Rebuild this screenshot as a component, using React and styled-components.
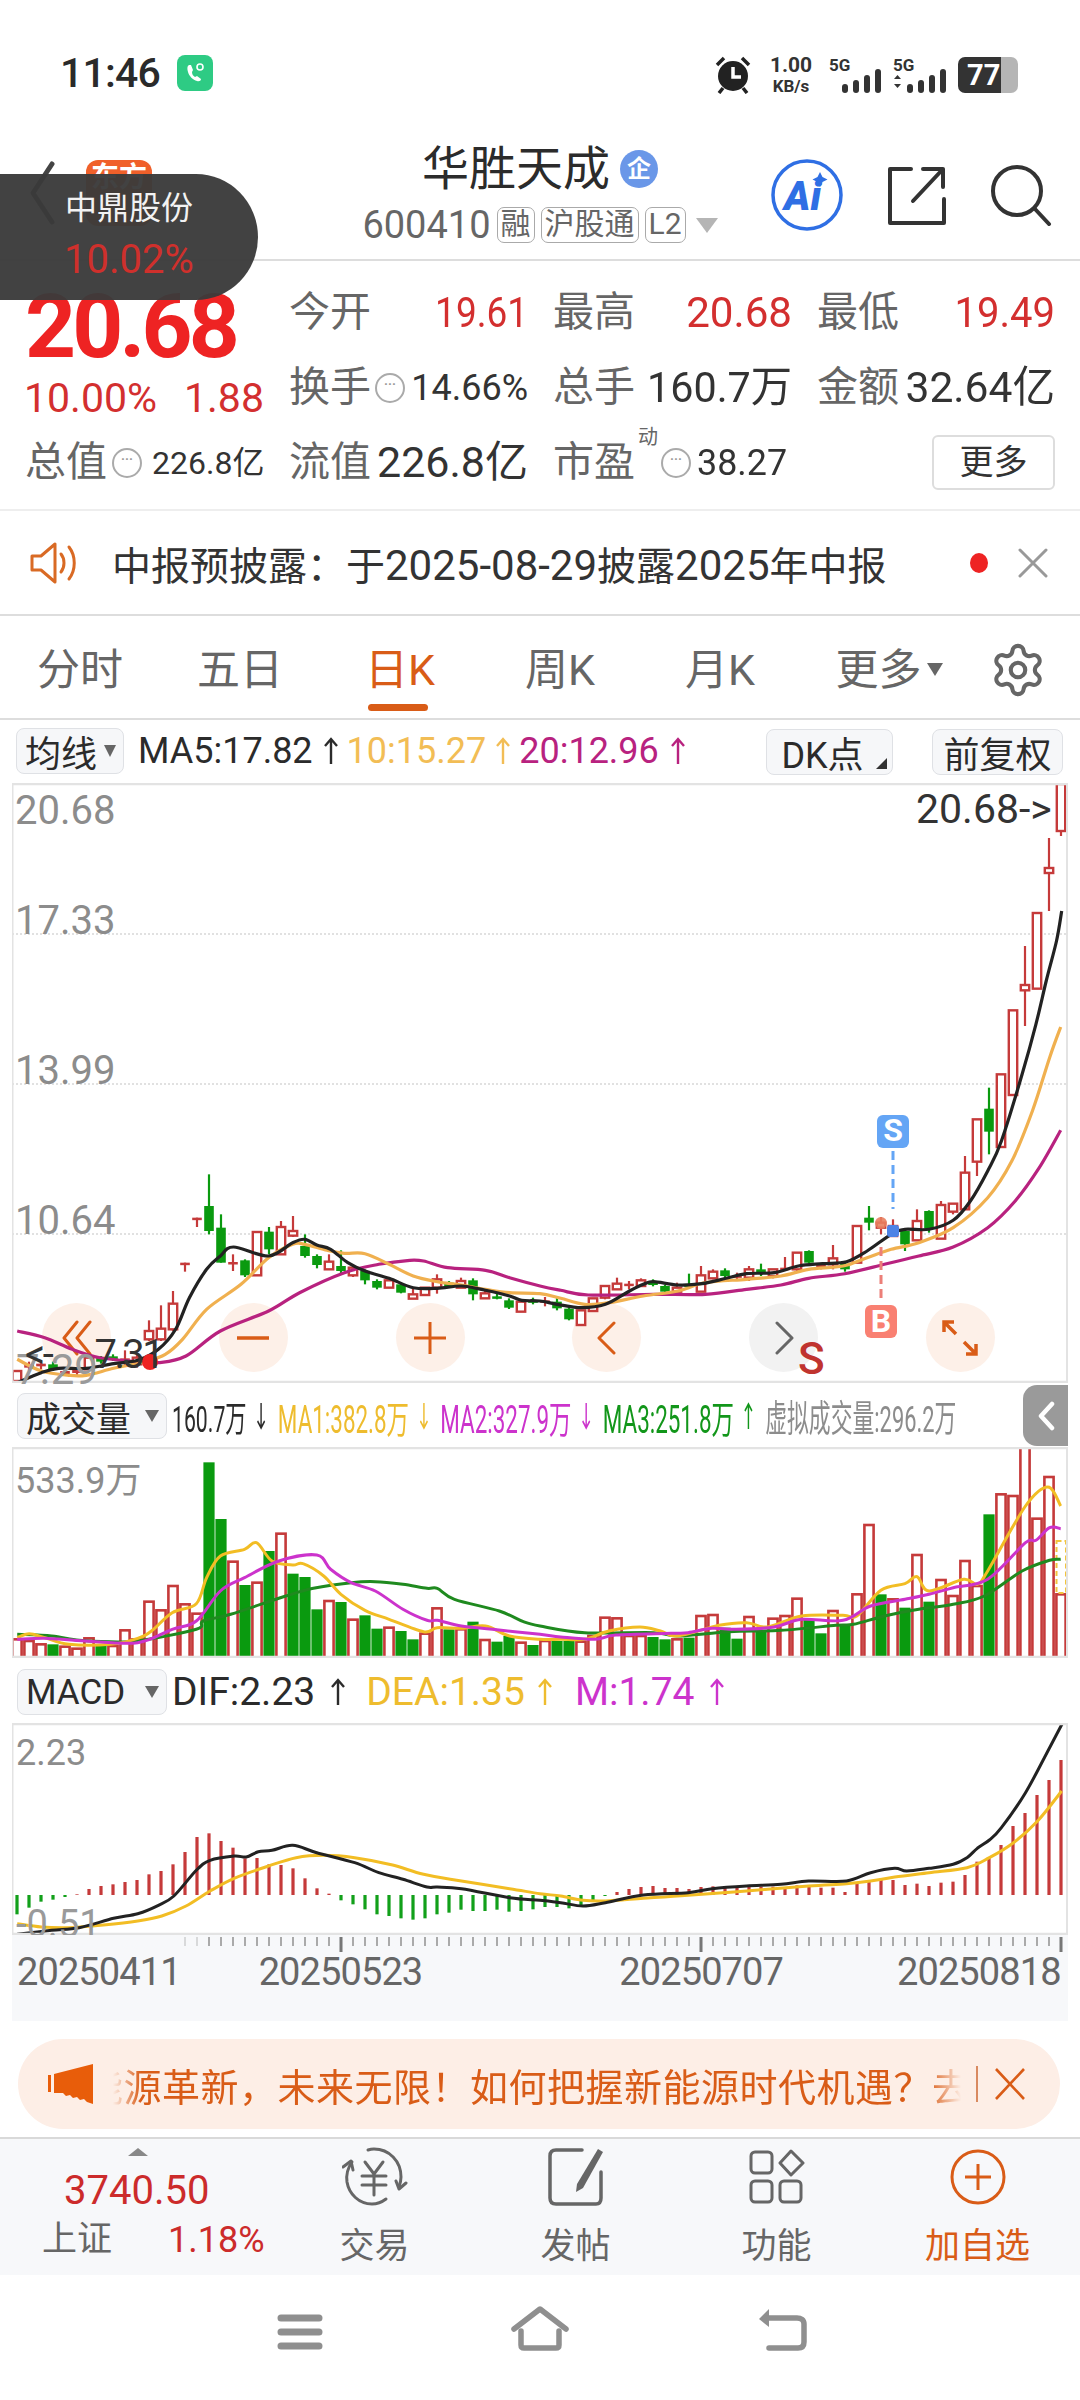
import React from 'react';
import styled, { createGlobalStyle } from 'styled-components';
import { Settings } from 'lucide-react';

const FONT = 'Roboto, "Noto Sans CJK SC", sans-serif';
const RED = '#d32f2f';

const Global = createGlobalStyle`
  html, body { margin: 0; padding: 0; background: #fff; }
  body { font-family: ${FONT}; color: #333; }
`;

const Page = styled.div`
  position: relative;
  width: 1080px;
  height: 2400px;
  overflow: hidden;
  background: #fff;
`;

/* ---------- status bar ---------- */
const StatusBar = styled.div`
  height: 130px;
  box-sizing: border-box;
  padding: 55px 62px 0 60px;
  display: flex;
  align-items: flex-start;
  justify-content: space-between;
`;
const StatusGroup = styled.div`
  display: flex;
  align-items: center;
  gap: ${p => p.$gap || 0}px;
  margin-left: ${p => p.$ml || 0}px;
`;
const Clock = styled.div`
  font-size: 41px;
  line-height: 35px;
  font-weight: 500;
  color: #2a2a2a;
  letter-spacing: -0.8px;
`;
const Speed = styled.div`
  display: flex;
  flex-direction: column;
  align-items: center;
  margin-left: 18px;
  width: 44px;
  color: #333;
  font-weight: 700;
`;
const SpeedValue = styled.span`
  font-size: 21px;
  line-height: 21px;
`;
const SpeedUnit = styled.span`
  font-size: 17px;
  line-height: 17px;
  margin-top: 2px;
`;
const Battery = styled.div`
  width: 60px;
  height: 36px;
  margin-left: 10px;
  border-radius: 7px;
  background: linear-gradient(90deg, #333 0 72%, #b5b5b5 72% 100%);
  color: #fff;
  font-size: 29px;
  font-weight: 700;
  line-height: 36px;
  padding-left: 9px;
  box-sizing: border-box;
`;

const ChatIcon = () => (
  <svg width="36" height="36" viewBox="0 0 36 36">
    <rect width="36" height="36" rx="8" fill="#2ecb84" />
    <path d="M12 10c-2 1-2 4-1 7 1 4 5 8 9 9 2 .5 4 0 4-2l-4-3-2 1c-2-1-3-3-3-5l1-2-2-5z" fill="#fff" />
    <circle cx="23" cy="12" r="3" fill="none" stroke="#fff" strokeWidth="1.6" />
  </svg>
);
const AlarmIcon = () => (
  <svg width="36" height="38" viewBox="0 0 36 38">
    <path d="M2 9 9 2M34 9l-7-7M8 32l-4 5M28 32l4 5" stroke="#222" strokeWidth="3.5" />
    <circle cx="18" cy="20" r="15" fill="#222" />
    <path d="M18 11v10h8" fill="none" stroke="#fff" strokeWidth="3.5" />
  </svg>
);
const SignalIcon = ({ arrows }) => {
  const w = arrows ? 55 : 53;
  return (
    <svg width={w} height="36" viewBox={`0 0 ${w} 36`}>
      <text x="0" y="14" fontFamily="Roboto" fontWeight="700" fontSize="17" fill="#333">5G</text>
      {arrows && <path d="M1 22l3.5-4 3.5 4zM1 27l3.5 4 3.5-4z" fill="#333" />}
      {[0, 1, 2, 3].map(i => {
        const h = [9, 13, 18, 24][i];
        const x = (arrows ? 14 : 13) + i * 11;
        return <rect key={i} x={x} y={36 - h} width="6" height={h} rx="3" fill="#333" />;
      })}
    </svg>
  );
};

/* ---------- header ---------- */
const Header = styled.div`
  position: relative;
  height: 131px;
  box-sizing: border-box;
  border-bottom: 2px solid #ddd;
  display: flex;
  justify-content: center;
`;
const BackArea = styled.div`
  position: absolute;
  left: 28px;
  top: 30px;
  display: flex;
  align-items: flex-start;
  gap: 30px;
`;
const OrangeBadge = styled.div`
  width: 66px;
  height: 66px;
  border-radius: 12px;
  background: #f0602a;
  color: #fff;
  font-size: 28px;
  font-weight: 700;
  text-align: center;
  line-height: 36px;
`;
const TitleBlock = styled.div`
  display: flex;
  flex-direction: column;
  align-items: center;
  padding-top: 14px;
`;
const TitleRow = styled.div`
  display: flex;
  align-items: center;
  gap: 10px;
  font-size: 47px;
  line-height: 50px;
  color: #2b2b2b;
`;
const EntBadge = styled.span`
  width: 38px;
  height: 38px;
  border-radius: 50%;
  background: #6a97e8;
  color: #fff;
  font-size: 24px;
  line-height: 38px;
  text-align: center;
  font-weight: 700;
`;
const CodeRow = styled.div`
  display: flex;
  align-items: center;
  margin-top: 12px;
  color: #666;
  font-size: 38px;
  line-height: 38px;
  gap: 6px;
`;
const Tag = styled.span`
  box-sizing: border-box;
  height: 36px;
  padding: 0 3px;
  border: 1.5px solid #aaa;
  border-radius: 7px;
  font-size: 30px;
  line-height: 32px;
  color: #666;
`;
const Caret = styled.span`
  width: 0;
  height: 0;
  flex: none;
  border-left: ${p => p.$w || 11}px solid transparent;
  border-right: ${p => p.$w || 11}px solid transparent;
  border-top: ${p => p.$h || 15}px solid ${p => p.$c || '#b5b5b5'};
  margin-left: ${p => p.$ml || 0}px;
`;
const HeaderIcons = styled.div`
  position: absolute;
  right: 28px;
  top: 28px;
  display: flex;
  align-items: center;
  gap: 43px;
`;
const Overlay = styled.div`
  position: absolute;
  left: 0;
  top: 174px;
  width: 258px;
  height: 126px;
  border-radius: 0 62px 62px 0 / 0 63px 63px 0;
  background: rgba(58, 58, 58, 0.96);
  display: flex;
  flex-direction: column;
  align-items: center;
  z-index: 5;
`;
const OverlayName = styled.div`
  font-size: 32px;
  color: #f2f2f2;
  line-height: 36px;
  margin-top: 16px;
`;
const OverlayPct = styled.div`
  font-size: 40px;
  color: #cf302c;
  line-height: 40px;
  margin-top: 14px;
`;

/* ---------- quote ---------- */
const Quote = styled.div`
  height: 250px;
  box-sizing: border-box;
  border-bottom: 2px solid #eee;
  display: flex;
  padding-top: 14px;
`;
const QuoteLeft = styled.div`
  width: 290px;
  box-sizing: border-box;
  padding-left: 24px;
  flex: none;
`;
const Price = styled.div`
  font-size: 89px;
  font-weight: 700;
  color: #ee2323;
  line-height: 75px;
  height: 75px;
  letter-spacing: -3.8px;
  margin-top: 14px;
  margin-left: 1px;
`;
const ChangeRow = styled.div`
  display: flex;
  gap: 27px;
  width: 240px;
  font-size: 41px;
  line-height: 40px;
  color: ${RED};
  margin-top: 14px;
  white-space: nowrap;
`;
const QuoteGrid = styled.div`
  display: grid;
  grid-template-columns: 264px 264px 237px;
  grid-auto-rows: 75px;
`;
const Cell = styled.div`
  display: flex;
  align-items: center;
  justify-content: ${p => (p.$start ? 'flex-start' : 'space-between')};
  padding-right: ${p => (p.$last ? 0 : 26)}px;
  white-space: nowrap;
`;
const LeftStat = styled(Cell)`
  height: 75px;
  margin-top: 7px;
  padding-right: 0;
  padding-left: 2px;
  justify-content: flex-start;
  width: 240px;
`;
const Label = styled.span`
  font-size: 41px;
  color: #666;
  line-height: 1;
  margin-left: -1px;
`;
const Value = styled.span`
  display: inline-block;
  font-size: ${p => p.$size || 43}px;
  line-height: 1;
  color: ${p => (p.$red ? RED : '#333')};
  transform: scaleX(${p => p.$sx || 1});
  transform-origin: ${p => (p.$fromLeft ? 'left' : 'right')} center;
  white-space: nowrap;
  margin-left: ${p => (p.$auto ? 'auto' : '0')};
`;
const Info = styled.span`
  box-sizing: border-box;
  width: 30px;
  height: 30px;
  border: 2.5px solid #aaa;
  border-radius: 50%;
  flex: none;
  margin: 0 ${p => p.$mr || 0}px 0 ${p => p.$ml || 3}px;
  color: #999;
  font-size: 13px;
  line-height: 18px;
  text-align: center;
  font-weight: 700;
`;
const Sup = styled.span`
  font-size: 20px;
  color: #666;
  align-self: flex-start;
  margin: 0 0 0 3px;
  line-height: 24px;
`;
const MoreBtn = styled.div`
  box-sizing: border-box;
  width: 123px;
  height: 55px;
  border: 2px solid #ddd;
  border-radius: 6px;
  font-size: 34px;
  line-height: 50px;
  text-align: center;
  color: #333;
  margin-left: auto;
`;

/* ---------- notice ---------- */
const Notice = styled.div`
  height: 105px;
  box-sizing: border-box;
  border-bottom: 2px solid #ddd;
  display: flex;
  align-items: center;
  padding: 0 32px 0 30px;
  color: #333;
`;
const NoticeText = styled.div`
  margin-left: 32px;
  font-size: 39px;
  flex: 1;
  white-space: nowrap;
`;
const Dg = styled.span`
  font-size: 42px;
`;
const RedDot = styled.span`
  width: 18px;
  height: 20px;
  border-radius: 50%;
  background: #ee2323;
  margin-right: 30px;
`;

/* ---------- tabs ---------- */
const Tabs = styled.div`
  height: 104px;
  box-sizing: border-box;
  border-bottom: 2px solid #ddd;
  display: flex;
  align-items: center;
  padding-top: 5px;
`;
const Tab = styled.div`
  position: relative;
  width: 160px;
  box-sizing: border-box;
  padding-left: ${p => p.$pl || 0}px;
  font-size: 43px;
  line-height: 48px;
  color: ${p => (p.$on ? '#d95c17' : '#666')};
  display: flex;
  justify-content: center;
  align-items: center;
  &::after {
    content: '';
    display: ${p => (p.$on ? 'block' : 'none')};
    position: absolute;
    left: 48px;
    width: 60px;
    height: 7px;
    border-radius: 4px;
    background: #d95c17;
    bottom: -17px;
  }
`;
const GearWrap = styled.div`
  margin-left: 29px;
  display: flex;
  color: #666;
`;

/* ---------- legend bars ---------- */
const MaBar = styled.div`
  height: 63px;
  box-sizing: border-box;
  display: flex;
  align-items: flex-start;
  padding: 8px 17px 0 16px;
`;
const Select = styled.div`
  position: relative;
  box-sizing: border-box;
  width: ${p => p.$w}px;
  height: 46px;
  flex: none;
  display: flex;
  align-items: center;
  justify-content: ${p => (p.$center ? 'center' : 'space-between')};
  padding: ${p => (p.$center ? `0 ${p.$pr || 0}px 0 0` : '0 7px 0 8px')};
  background: #f6f7f9;
  border: 1.5px solid #dfe1e5;
  border-radius: 8px;
  font-size: ${p => p.$fs || 36}px;
  color: #2b2b2b;
  white-space: nowrap;
  margin-top: ${p => p.$mt || 0}px;
  margin-left: ${p => (p.$auto ? 'auto' : `${p.$ml || 0}px`)};
`;
const CornerTri = styled.span`
  position: absolute;
  right: 5px;
  bottom: 5px;
  width: 0;
  height: 0;
  border-left: 11px solid transparent;
  border-bottom: 11px solid #333;
`;
const Legend = styled.div`
  display: flex;
  align-items: center;
  height: 46px;
  white-space: nowrap;
  font-size: ${p => p.$fs || 36}px;
  margin-left: ${p => p.$ml || 0}px;
  flex: none;
  transform: scaleX(${p => p.$sx || 1});
  transform-origin: left center;
`;
const LegendItem = styled.span`
  display: inline-flex;
  align-items: center;
  color: ${p => p.$c};
  margin-right: ${p => p.$mr || 0}px;
  font-size: ${p => (p.$fs ? `${p.$fs}px` : 'inherit')};
`;
const ArrowSvg = styled.svg`
  margin-left: ${p => p.$ml}px;
  flex: none;
`;
const Arr = ({ down, ml = 10, w = 18 }) => (
  <ArrowSvg $ml={ml} width={w} height="28" viewBox="0 0 18 28">
    <path
      d={down ? 'M9 1v25M3 19l6 7 6-7' : 'M9 27V2M3 9l6-7 6 7'}
      fill="none"
      stroke="currentColor"
      strokeWidth="2.4"
    />
  </ArrowSvg>
);
const Bar = styled.div`
  position: relative;
  height: ${p => p.$h}px;
  box-sizing: border-box;
  display: flex;
  align-items: flex-start;
  padding: ${p => p.$pt}px 0 0 17px;
`;
const Handle = styled.div`
  position: absolute;
  right: 12px;
  top: 2px;
  width: 45px;
  height: 61px;
  border-radius: 14px 0 0 14px;
  background: #9a9a9a;
  display: flex;
  align-items: center;
  justify-content: center;
`;

/* ---------- charts ---------- */
const ChartFrame = styled.div`
  position: relative;
  margin: 0 12px;
  height: ${p => p.$h}px;
`;
const ChartSvg = styled.svg`
  display: block;
  position: relative;
`;
const ChartBtns = styled.div`
  position: absolute;
  left: 30px;
  top: 520px;
  width: 953px;
  display: flex;
  justify-content: space-between;
`;
const ChartBtn = styled.div`
  width: 69px;
  height: 69px;
  border-radius: 50%;
  background: ${p => (p.$gray ? '#f2f2f2' : '#fdf0e8')};
  display: flex;
  align-items: center;
  justify-content: center;
`;
const AxisLabel = styled.span`
  position: absolute;
  left: ${p => p.$l}px;
  top: ${p => p.$t}px;
  font-size: ${p => p.$s || 39}px;
  line-height: 1;
  color: ${p => p.$c || '#8c8c8c'};
  white-space: nowrap;
  font-weight: ${p => p.$w || 400};
`;
const PointerLabel = styled(AxisLabel)`
  letter-spacing: -2.6px;
  word-spacing: 36px;
`;
const AxisRow = styled.div`
  position: relative;
  margin: 0 12px;
  height: 86px;
  background: #f7f8fa;
  svg { display: block; }
`;
const AxisDates = styled.div`
  position: absolute;
  left: 5px;
  top: 15px;
  display: flex;
  font-size: 38px;
  line-height: 44px;
  color: #666;
  letter-spacing: -0.9px;
`;
const AxisDate = styled.span`
  margin-left: ${p => p.$ml || 0}px;
`;

/* ---------- banner ---------- */
const BannerWrap = styled.div`
  height: 118px;
  box-sizing: border-box;
  padding: 18px 20px 0 18px;
  border-bottom: 2px solid #d9d9d9;
`;
const Banner = styled.div`
  height: 90px;
  border-radius: 45px;
  background: #fdeee6;
  display: flex;
  align-items: center;
  padding-left: 30px;
  color: #d95c17;
`;
const Marquee = styled.div`
  margin-left: 19px;
  width: 848px;
  overflow: hidden;
  white-space: nowrap;
  font-size: 38px;
  letter-spacing: 0.5px;
  -webkit-mask-image: linear-gradient(90deg, transparent 0, #000 28px, #000 815px, transparent 848px);
  mask-image: linear-gradient(90deg, transparent 0, #000 28px, #000 815px, transparent 848px);
`;
const MarqueeInner = styled.div`
  margin-left: -28px;
`;
const BannerSep = styled.span`
  width: 1.5px;
  height: 36px;
  background: #d98a60;
  margin: 0 16px 0 15px;
`;

/* ---------- dock ---------- */
const Dock = styled.div`
  height: 136px;
  background: #f7f8fa;
  display: flex;
  box-sizing: border-box;
`;
const IndexBox = styled.div`
  position: relative;
  width: 274px;
  flex: none;
  box-sizing: border-box;
  padding: 32px 0 0 42px;
`;
const IndexTri = styled.span`
  position: absolute;
  left: 128px;
  top: 9px;
  width: 0;
  height: 0;
  border-left: 10px solid transparent;
  border-right: 10px solid transparent;
  border-bottom: 8px solid #888;
`;
const IndexVal = styled.div`
  font-size: 40px;
  line-height: 40px;
  color: #cc2b2b;
  padding-left: 22px;
`;
const IndexRow = styled.div`
  display: flex;
  align-items: center;
  margin-top: 8px;
  font-size: 35px;
  line-height: 42px;
  color: #666;
`;
const IndexPct = styled.span`
  color: #cc2b2b;
  font-size: 36px;
  margin-left: 56px;
`;
const DockItem = styled.div`
  width: 201px;
  flex: none;
  display: flex;
  flex-direction: column;
  align-items: center;
  padding-top: 6px;
  font-size: 35px;
  color: ${p => (p.$on ? '#d95c17' : '#666')};
`;
const DockIcon = styled.div`
  height: 64px;
  display: flex;
  align-items: center;
`;
const DockText = styled.div`
  line-height: 40px;
  margin-top: 18px;
`;

/* ---------- nav ---------- */
const Nav = styled.div`
  height: 126px;
  display: flex;
  align-items: flex-start;
  padding: 38px 0 0 277px;
`;
const NavSlot = styled.div`
  margin-right: ${p => p.$mr}px;
  margin-top: ${p => p.$mt || 0}px;
  display: flex;
`;

/* ---------- data: pixel readings of the candles ---------- */
const X = i => 17 + 12 * i;
const candles = [
  [1290,1320,1290,1320,'r'],[1270,1280,1262,1290,'r'],[1268,1276,1260,1285,'r'],[1270,1285,1262,1290,'g'],[1290,1300,1285,1305,'r'],[1285,1296,1278,1304,'r'],
  [1250,1285,1245,1290,'r'],[1250,1262,1245,1268,'g'],[1246,1254,1240,1260,'g'],[1252,1258,1228,1275,'r'],[1250,1270,1240,1280,'r'],[1170,1195,1138,1200,'r'],
  [1163,1195,1093,1200,'r'],[1088,1165,1050,1170,'r'],[965,970,965,992,'r'],[830,835,830,858,'r'],[795,870,700,880,'g'],[860,965,820,965,'g'],
  [963,969,940,990,'r'],[958,1003,955,1008,'g'],[873,1003,873,1003,'r'],[872,925,858,940,'g'],[858,940,840,940,'r'],[870,884,825,888,'r'],
  [915,945,880,950,'g'],[945,972,940,982,'g'],[962,985,940,985,'r'],[975,990,928,1000,'g'],[980,1003,980,1008,'r'],[990,1018,985,1030,'g'],
  [1020,1040,1015,1045,'g'],[1018,1040,1018,1040,'r'],[1030,1055,1028,1057,'g'],[1060,1073,1040,1073,'r'],[1040,1062,1040,1062,'r'],[1015,1040,1000,1058,'r'],
  [1025,1035,1020,1040,'g'],[1020,1040,1010,1040,'r'],[1018,1060,1012,1078,'g'],[1057,1072,1045,1072,'r'],[1066,1070,1055,1075,'g'],[1078,1100,1072,1104,'g'],
  [1082,1112,1082,1112,'r'],[1078,1084,1070,1090,'g'],
  [1078,1084,1068,1096,'r'],[1082,1102,1068,1108,'g'],[1103,1135,1100,1138,'g'],[1108,1152,1108,1152,'r'],[1072,1110,1072,1110,'r'],[1035,1070,1035,1075,'r'],
  [1028,1045,1010,1045,'r'],[1028,1034,1020,1045,'r'],[1018,1035,1012,1035,'r'],[1020,1032,1015,1036,'g'],[1035,1052,1032,1055,'g'],[1040,1052,1025,1052,'r'],
  [1030,1036,998,1040,'g'],[1003,1052,975,1052,'r'],[992,1012,985,1015,'r'],[988,1005,982,1015,'g'],[1003,1008,995,1015,'r'],[985,1010,975,1020,'r'],
  [985,995,968,1005,'g'],[985,1005,985,1012,'r'],[980,985,948,990,'r'],[935,985,935,995,'r'],[930,965,928,968,'g'],[968,978,968,985,'r'],
  [952,970,912,985,'r'],[968,985,965,992,'g'],[855,965,855,965,'r'],[830,845,795,868,'g'],[845,860,828,880,'r'],[855,885,835,885,'r'],
  [870,910,868,930,'g'],[840,898,805,898,'r'],[810,862,808,875,'g'],[792,893,780,893,'r'],[788,812,788,820,'r'],[695,805,645,805,'r'],
  [535,662,535,705,'r'],[503,572,440,640,'g'],[400,618,400,618,'r'],[208,462,208,462,'r'],[132,148,15,255,'r'],[-84,143,-84,143,'r'],[-219,-204,-309,-90,'r'],[-471,-330,-471,-315,'r'],
];
const vol = [
  [775,'r'],[780,'r'],[790,'r'],[790,'g'],[797,'r'],[803,'r'],[772,'r'],[795,'g'],[795,'r'],[748,'r'],[775,'r'],[662,'r'],[688,'r'],[615,'r'],[670,'r'],[698,'r'],
  [244,'g'],[414,'g'],[542,'r'],[612,'g'],[605,'r'],[510,'g'],[458,'r'],[578,'g'],[588,'g'],[685,'g'],[660,'r'],[663,'g'],[716,'r'],[703,'g'],[743,'g'],[740,'r'],
  [750,'g'],[775,'g'],[758,'r'],[682,'r'],[745,'g'],[745,'r'],[722,'g'],[777,'r'],[782,'g'],[765,'g'],[785,'r'],[792,'g'],
  [780,'r'],[780,'g'],[780,'g'],[782,'r'],[765,'r'],[710,'r'],[712,'r'],[765,'r'],[765,'r'],[768,'g'],[775,'g'],[775,'r'],[770,'g'],[705,'r'],[702,'r'],[740,'g'],
  [773,'g'],[708,'r'],[750,'g'],[713,'r'],[705,'r'],[653,'r'],[715,'g'],[757,'g'],[690,'r'],[730,'g'],[640,'r'],[432,'r'],[640,'g'],[655,'r'],[680,'g'],[522,'r'],
  [662,'g'],[597,'r'],[645,'r'],[540,'r'],[615,'r'],[400,'g'],[340,'r'],[345,'r'],[200,'r'],[413,'r'],[288,'r'],[640,'r'],
];
const macd = [
  760,740,722,716,708,700,684,675,670,663,657,640,630,610,573,528,517,540,560,592,591,610,612,622,652,682,698,718,730,745,760,765,772,776,772,760,755,746,750,750,746,752,750,745,
  738,738,742,738,720,705,693,684,678,675,681,681,684,678,676,676,678,675,677,677,680,673,675,680,680,693,668,658,655,657,672,668,675,665,662,642,602,590,552,495,456,402,357,297,
];

const smooth = pts => {
  let d = `M${pts[0][0].toFixed(1)} ${pts[0][1].toFixed(1)}`;
  for (let i = 0; i < pts.length - 1; i++) {
    const p0 = pts[i - 1] || pts[i];
    const p1 = pts[i];
    const p2 = pts[i + 1];
    const p3 = pts[i + 2] || p2;
    const c1x = p1[0] + (p2[0] - p0[0]) / 6;
    const c1y = p1[1] + (p2[1] - p0[1]) / 6;
    const c2x = p2[0] - (p3[0] - p1[0]) / 6;
    const c2y = p2[1] - (p3[1] - p1[1]) / 6;
    d += `C${c1x.toFixed(1)} ${c1y.toFixed(1)} ${c2x.toFixed(1)} ${c2y.toFixed(1)} ${p2[0].toFixed(1)} ${p2[1].toFixed(1)}`;
  }
  return d;
};
const toPage = (a, b, base) => [
  ...a.map(([x, y]) => [x / 2.904, base + y / 3]),
  ...b.map(([x, y]) => [540 + x / 2.904, base + y / 3]),
];

const K_BASE = 940;
const VOL_BASE = 1380;
const M_BASE = 1660;

const ma5 = toPage(
  [[50,1325],[120,1295],[170,1282],[250,1282],[330,1268],[400,1258],[460,1225],[510,1165],[550,1070],[600,985],[640,945],[678,918],[780,945],[850,905],[885,895],[920,912],[960,925],[1010,965],[1060,990],[1130,1012],[1200,1040],[1270,1042],[1340,1035],[1410,1048],[1480,1065],[1515,1078]],
  [[0,1080],[50,1090],[120,1100],[190,1090],[260,1050],[300,1030],[330,1022],[400,1032],[470,1028],[540,1012],[600,998],[680,995],[750,975],[820,968],[890,962],[950,930],[1020,880],[1060,865],[1130,865],[1200,838],[1250,780],[1300,690],[1340,600],[1400,400],[1440,250],[1470,120],[1500,0],[1515,-90]],
  K_BASE);
const ma10 = toPage(
  [[50,1255],[120,1290],[200,1303],[250,1303],[330,1282],[420,1262],[480,1240],[530,1195],[600,1105],[700,1030],[780,950],[850,910],[885,910],[950,928],[1000,937],[1060,938],[1130,970],[1200,1005],[1270,1022],[1340,1032],[1410,1045],[1480,1055]],
  [[0,1058],[60,1072],[130,1090],[200,1085],[300,1065],[400,1050],[480,1025],[600,1015],[700,1005],[780,985],[880,975],[950,950],[1020,925],[1100,905],[1200,860],[1300,770],[1370,660],[1430,510],[1480,350],[1512,258]],
  K_BASE);
const ma20 = toPage(
  [[50,1170],[130,1190],[210,1225],[290,1250],[400,1262],[460,1265],[540,1245],[640,1170],[780,1110],[870,1055],[1000,995],[1100,970],[1190,958],[1230,960],[1300,980],[1410,988],[1480,1010]],
  [[0,1035],[60,1048],[140,1062],[330,1060],[480,1060],[600,1045],[700,1032],[780,1012],[885,998],[1000,970],[1100,945],[1200,918],[1300,860],[1380,780],[1450,680],[1512,568]],
  K_BASE);

const vMa1 = toPage(
  [[50,770],[85,758],[130,770],[200,790],[320,790],[400,772],[440,750],[500,695],[570,668],[600,590],[640,525],[710,505],[745,485],[790,540],[850,552],[880,548],[940,585],[990,640],[1060,688],[1130,715],[1230,752],[1270,740],[1340,742],[1410,735],[1480,765]],
  [[0,775],[60,775],[130,775],[200,750],[290,738],[350,750],[400,765],[520,733],[600,725],[660,738],[760,705],[880,703],[920,705],[990,628],[1060,608],[1095,587],[1130,630],[1230,595],[1270,610],[1300,570],[1410,375],[1475,318],[1512,375]],
  VOL_BASE);
const vMa2 = toPage(
  [[50,775],[130,772],[250,780],[400,785],[500,745],[570,720],[640,630],[710,590],[810,540],[920,522],[960,565],[1020,605],[1090,630],[1170,685],[1240,718],[1270,718],[1340,735],[1430,745]],
  [[0,760],[60,768],[160,775],[220,762],[380,757],[430,755],[500,742],[570,745],[680,738],[760,715],[880,718],[960,675],[1060,655],[1130,640],[1200,620],[1300,595],[1410,485],[1440,478],[1480,440],[1512,443]],
  VOL_BASE);
const vMa3 = toPage(
  [[50,760],[150,765],[230,778],[320,782],[400,780],[570,745],[590,720],[670,700],[830,645],[910,622],[1020,605],[1090,602],[1170,610],[1240,622],[1270,622],[1320,655],[1450,690],[1520,722]],
  [[0,735],[130,755],[330,755],[400,765],[550,752],[700,748],[860,733],[910,730],[1000,705],[1100,685],[1200,670],[1290,645],[1400,570],[1480,538],[1512,535]],
  VOL_BASE);

const dif = toPage(
  [[50,820],[150,808],[230,800],[330,772],[400,758],[460,733],[505,705],[570,628],[610,598],[680,585],[715,588],[750,572],[790,568],[850,553],[920,575],[1030,605],[1100,635],[1170,655],[1240,678],[1270,678],[1340,683],[1480,710]],
  [[0,718],[60,725],[125,735],[190,725],[300,702],[430,695],[500,683],[600,675],[700,670],[780,660],[890,660],[960,635],[1030,622],[1065,630],[1130,622],[1200,610],[1240,590],[1270,562],[1305,537],[1340,500],[1410,395],[1480,260],[1518,185]],
  M_BASE);
const dea = toPage(
  [[50,788],[120,798],[200,800],[300,792],[400,780],[470,765],[540,735],[610,690],[680,652],[780,615],[860,590],[940,583],[1030,590],[1140,612],[1230,640],[1340,660],[1480,683]],
  [[0,698],[60,705],[125,718],[190,720],[300,712],[430,703],[600,690],[780,675],[890,668],[960,660],[1030,648],[1130,635],[1240,620],[1305,590],[1375,545],[1445,480],[1515,390]],
  M_BASE);

const CR = '#c53a3a';
const CG = '#0a9a0f';

const Frame = ({ x0, y0, h }) => (
  <g fill="none" stroke="#e3e3e3">
    <path d={`M${x0 + 0.5} ${y0}V${y0 + h}`} strokeWidth="2" />
    <path d={`M${x0 + 1055} ${y0}V${y0 + h}`} strokeWidth="2" />
    <path d={`M${x0} ${y0 + 1}H${x0 + 1056}`} strokeWidth="2.5" />
    <path d={`M${x0} ${y0 + h - 1}H${x0 + 1056}`} strokeWidth="2.5" />
  </g>
);

const KChart = () => (
  <ChartSvg width="1056" height="600" viewBox="12 782 1056 600">
    {[933, 1083, 1233].map(y => (
      <path key={y} d={`M12 ${y}H1067`} stroke="#d8d8d8" strokeWidth="1.5" strokeDasharray="2 2" />
    ))}
    {candles.map((c, i) => {
      const [t, b, wt, wb, col] = c;
      const y = v => K_BASE + v / 3;
      const colr = col === 'r' ? CR : CG;
      const thin = b - t < 12;
      return (
        <g key={i}>
          <path d={`M${X(i)} ${y(wt)}V${y(wb)}`} stroke={colr} strokeWidth="2.2" />
          {col === 'r' && !thin
            ? <rect x={X(i) - 4.2} y={y(t)} width="8.4" height={y(b) - y(t)} fill="#fff" stroke={colr} strokeWidth="2.4" />
            : <rect x={X(i) - 4.8} y={y(t)} width="9.6" height={Math.max(y(b) - y(t), 2.5)} fill={colr} />}
        </g>
      );
    })}
    <path d={smooth(ma20)} fill="none" stroke="#b8227f" strokeWidth="3.2" />
    <path d={smooth(ma10)} fill="none" stroke="#f0b04f" strokeWidth="3.2" />
    <path d={smooth(ma5)} fill="none" stroke="#222" strokeWidth="3.2" />
    <circle cx="150" cy="1361" r="8" fill="#ee2323" />
    <path d="M893 1150V1208" stroke="#64a5f5" strokeWidth="3" strokeDasharray="9 5" />
    <path d="M881 1246V1302" stroke="#ec7f78" strokeWidth="3" strokeDasharray="9 5" />
    <circle cx="881" cy="1222" r="6" fill="#e8805f" opacity=".9" />
    <rect x="887" y="1224" width="12" height="12" rx="3" fill="#4d83e6" />
    <rect x="877" y="1114" width="32" height="33" rx="6" fill="#64a5f5" />
    <text x="893" y="1140" textAnchor="middle" fontFamily="Roboto" fontWeight="700" fontSize="32" fill="#fff">S</text>
    <rect x="865" y="1304" width="32" height="33" rx="6" fill="#f98072" />
    <text x="881" y="1331" textAnchor="middle" fontFamily="Roboto" fontWeight="700" fontSize="32" fill="#fff">B</text>
    <Frame x0={12} y0={782} h={600} />
  </ChartSvg>
);

const VolChart = () => (
  <ChartSvg width="1056" height="211" viewBox="12 1446 1056 211">
    {vol.map(([t, c], i) => {
      const y = VOL_BASE + t / 3;
      const bot = VOL_BASE + 832 / 3;
      return c === 'r'
        ? <rect key={i} x={X(i) - 4.6} y={y} width="9.2" height={bot - y - 1} fill="#fff" stroke={CR} strokeWidth="2.6" />
        : <rect key={i} x={X(i) - 5.6} y={y} width="11.2" height={bot - y} fill={CG} />;
    })}
    <rect x="1056.5" y="1540" width="9.5" height="52" fill="none" stroke="#f2c43d" strokeWidth="2" strokeDasharray="5 3" />
    <path d={smooth(vMa3)} fill="none" stroke="#1f8a1f" strokeWidth="3" />
    <path d={smooth(vMa1)} fill="none" stroke="#f2bd24" strokeWidth="3" />
    <path d={smooth(vMa2)} fill="none" stroke="#cc33cc" strokeWidth="3" />
    <Frame x0={12} y0={1446} h={211} />
  </ChartSvg>
);

const MacdChart = () => (
  <ChartSvg width="1056" height="212" viewBox="12 1722 1056 212">
    {macd.map((t, i) => {
      const z = M_BASE + 702 / 3;
      const y = M_BASE + t / 3;
      return (
        <rect key={i} x={X(i) - 1.6} y={Math.min(y, z)} width="3.2" height={Math.abs(y - z)} fill={t > 702 ? '#12a01a' : '#c53a3a'} />
      );
    })}
    <path d={smooth(dea)} fill="none" stroke="#f2bd24" strokeWidth="3" />
    <path d={smooth(dif)} fill="none" stroke="#222" strokeWidth="3" />
    <Frame x0={12} y0={1722} h={212} />
  </ChartSvg>
);

const Ticks = () => (
  <svg width="1056" height="20" viewBox="12 1934 1056 20">
    {Array.from({ length: 74 }, (_, k) => k + 14).map(i => {
      const long = i === 27 || i === 57 || i === 87;
      return (
        <rect key={i} x={X(i) - (long ? 1.5 : 1)} y="1936" width={long ? 3 : 2} height={long ? 15 : 9} fill={long ? '#777' : '#aaa'} opacity={i < 16 ? 0.4 : 1} />
      );
    })}
  </svg>
);

const stroke = { fill: 'none', strokeLinecap: 'round', strokeLinejoin: 'round' };

export default function App() {
  return (
    <Page>
      <Global />
      <StatusBar>
        <StatusGroup $gap={17}>
          <Clock>11:46</Clock>
          <ChatIcon />
        </StatusGroup>
        <StatusGroup>
          <AlarmIcon />
          <Speed><SpeedValue>1.00</SpeedValue><SpeedUnit>KB/s</SpeedUnit></Speed>
          <StatusGroup $gap={11} $ml={16}>
            <SignalIcon />
            <SignalIcon arrows />
          </StatusGroup>
          <Battery>77</Battery>
        </StatusGroup>
      </StatusBar>

      <Header>
        <BackArea>
          <svg width="28" height="66" viewBox="0 0 28 66">
            <path d="M24 4 5 33l19 29" {...stroke} stroke="#444" strokeWidth="5" />
          </svg>
          <OrangeBadge>东方</OrangeBadge>
        </BackArea>
        <TitleBlock>
          <TitleRow>华胜天成<EntBadge>企</EntBadge></TitleRow>
          <CodeRow>
            <span>600410</span>
            <Tag>融</Tag><Tag>沪股通</Tag><Tag>L2</Tag>
            <Caret $ml={4} />
          </CodeRow>
        </TitleBlock>
        <HeaderIcons>
          <svg width="74" height="74" viewBox="0 0 74 74">
            <circle cx="37" cy="37" r="34" fill="#fff" stroke="#2f6fe4" strokeWidth="3.5" />
            <text x="14" y="52" fontFamily="Roboto" fontWeight="900" fontStyle="italic" fontSize="40" fill="#2f6fe4">Ai</text>
            <path d="M50 14l2.5 5 5 2.5-5 2.5-2.5 5-2.5-5-5-2.5 5-2.5z" fill="#2f6fe4" />
          </svg>
          <svg width="60" height="60" viewBox="0 0 60 60">
            <path d="M24 4H3v54h54V34" {...stroke} stroke="#333" strokeWidth="4" />
            <path d="M26 36 56 4M36 4h20M56 4v18" {...stroke} stroke="#333" strokeWidth="4" />
          </svg>
          <svg width="62" height="62" viewBox="0 0 62 62">
            <circle cx="27" cy="27" r="24" {...stroke} stroke="#333" strokeWidth="4" />
            <path d="M45 45 59 60" {...stroke} stroke="#333" strokeWidth="4" />
          </svg>
        </HeaderIcons>
      </Header>

      <Overlay>
        <OverlayName>中鼎股份</OverlayName>
        <OverlayPct>10.02%</OverlayPct>
      </Overlay>

      <Quote>
        <QuoteLeft>
          <Price>20.68</Price>
          <ChangeRow><span>10.00%</span><span>1.88</span></ChangeRow>
          <LeftStat>
            <Label>总值</Label><Info $ml={5} $mr={10}>···</Info>
            <Value $size={32} $fromLeft>226.8亿</Value>
          </LeftStat>
        </QuoteLeft>
        <QuoteGrid>
          <Cell><Label>今开</Label><Value $red $sx={0.86}>19.61</Value></Cell>
          <Cell><Label>最高</Label><Value $red $sx={0.98}>20.68</Value></Cell>
          <Cell $last><Label>最低</Label><Value $red $sx={0.93}>19.49</Value></Cell>

          <Cell>
            <Label>换手</Label><Info $ml={4}>···</Info>
            <Value $size={36} $auto>14.66%</Value>
          </Cell>
          <Cell><Label>总手</Label><Value $sx={0.96}>160.7万</Value></Cell>
          <Cell $last><Label>金额</Label><Value $sx={0.99}>32.64亿</Value></Cell>

          <Cell><Label>流值</Label><Value>226.8亿</Value></Cell>
          <Cell $start>
            <Label>市盈</Label><Sup>动</Sup><Info $ml={3} $mr={6}>···</Info>
            <Value $size={37} $fromLeft $sx={0.97}>38.27</Value>
          </Cell>
          <Cell $last><MoreBtn>更多</MoreBtn></Cell>
        </QuoteGrid>
      </Quote>

      <Notice>
        <svg width="50" height="44" viewBox="0 0 50 44">
          <path d="M2 15h9L25 3v38L11 29H2z" {...stroke} stroke="#d96a24" strokeWidth="3" />
          <path d="M31 13c4 5 4 13 0 18M39 6c7 9 7 23 0 32" {...stroke} stroke="#d96a24" strokeWidth="3" />
        </svg>
        <NoticeText>中报预披露：于<Dg>2025-08-29</Dg>披露<Dg>2025</Dg>年中报</NoticeText>
        <RedDot />
        <svg width="30" height="30" viewBox="0 0 30 30">
          <path d="M2 2l26 26M28 2 2 28" {...stroke} stroke="#999" strokeWidth="3" />
        </svg>
      </Notice>

      <Tabs>
        <Tab>分时</Tab>
        <Tab>五日</Tab>
        <Tab $on>日K</Tab>
        <Tab>周K</Tab>
        <Tab>月K</Tab>
        <Tab $pl={18}>更多<Caret $w={8} $h={13} $c="#666" $ml={5} /></Tab>
        <GearWrap><Settings size={58} strokeWidth={1.7} /></GearWrap>
      </Tabs>

      <MaBar>
        <Select $w={108}>均线<Caret $w={6} $h={12} $c="#666" /></Select>
        <Legend $ml={14}>
          <LegendItem $c="#2b2b2b" $mr={7}>MA5:17.82<Arr ml={9} /></LegendItem>
          <LegendItem $c="#f2bd55" $mr={7}>10:15.27<Arr ml={8} /></LegendItem>
          <LegendItem $c="#b8227f">20:12.96<Arr /></LegendItem>
        </Legend>
        <Select $w={127} $center $pr={14} $mt={1} $auto>DK点<CornerTri /></Select>
        <Select $w={131} $center $mt={1} $ml={39}>前复权</Select>
      </MaBar>

      <ChartFrame $h={600}>
        <ChartBtns>
          <ChartBtn>
            <svg width="30" height="36" viewBox="0 0 30 36"><path d="M15 2 2 18l13 16M28 2 15 18l13 16" {...stroke} stroke="#d95c17" strokeWidth="3" /></svg>
          </ChartBtn>
          <ChartBtn>
            <svg width="34" height="6" viewBox="0 0 34 6"><path d="M1 3h32" stroke="#d95c17" strokeWidth="3.5" /></svg>
          </ChartBtn>
          <ChartBtn>
            <svg width="34" height="34" viewBox="0 0 34 34"><path d="M1 17h32M17 1v32" stroke="#d95c17" strokeWidth="3" /></svg>
          </ChartBtn>
          <ChartBtn>
            <svg width="20" height="34" viewBox="0 0 20 34"><path d="M17 2 2 17l15 15" {...stroke} stroke="#d95c17" strokeWidth="3" /></svg>
          </ChartBtn>
          <ChartBtn $gray>
            <svg width="20" height="34" viewBox="0 0 20 34"><path d="M3 2l15 15L3 32" {...stroke} stroke="#666" strokeWidth="3" /></svg>
          </ChartBtn>
          <ChartBtn>
            <svg width="36" height="36" viewBox="0 0 36 36">
              <path d="M2 12V2h10M2 2l12 12M34 24v10H24M34 34 22 22" fill="none" stroke="#d95c17" strokeWidth="3.5" />
            </svg>
          </ChartBtn>
        </ChartBtns>
        <KChart />
        <AxisLabel $l={3} $t={8} $s={40}>20.68</AxisLabel>
        <AxisLabel $l={3} $t={118} $s={40}>17.33</AxisLabel>
        <AxisLabel $l={3} $t={268} $s={40}>13.99</AxisLabel>
        <AxisLabel $l={3} $t={418} $s={40}>10.64</AxisLabel>
        <AxisLabel $l={4} $t={566} $s={42} $c="#9a9a9a">7.29</AxisLabel>
        <PointerLabel $l={13} $t={552} $s={40} $c="#333">&lt;- 7.31</PointerLabel>
        <AxisLabel $l={904} $t={6} $s={41} $c="#333">20.68-&gt;</AxisLabel>
        <AxisLabel $l={786} $t={554} $c="#c0342f" $s={44} $w={500}>S</AxisLabel>
      </ChartFrame>

      <Bar $h={64} $pt={10}>
        <Select $w={150} $fs={35}>成交量<Caret $w={7} $h={12} $c="#666" /></Select>
        <Legend $ml={5} $sx={0.59} $fs={38}>
          <LegendItem $c="#2b2b2b" $mr={17} $fs={36}>160.7万<Arr down ml={14} w={22} /></LegendItem>
          <LegendItem $c="#eebc2e" $mr={17}>MA1:382.8万<Arr down ml={14} w={22} /></LegendItem>
          <LegendItem $c="#cc33cc" $mr={17}>MA2:327.9万<Arr down ml={14} w={22} /></LegendItem>
          <LegendItem $c="#12961a" $mr={17}>MA3:251.8万<Arr ml={14} w={22} /></LegendItem>
          <LegendItem $c="#8c8c8c" $fs={37}>虚拟成交量:296.2万</LegendItem>
        </Legend>
        <Handle>
          <svg width="18" height="30" viewBox="0 0 18 30"><path d="M15 3 4 15l11 12" {...stroke} stroke="#fff" strokeWidth="4.5" /></svg>
        </Handle>
      </Bar>

      <ChartFrame $h={211}>
        <VolChart />
        <AxisLabel $l={3} $t={16} $s={36}>533.9万</AxisLabel>
      </ChartFrame>

      <Bar $h={65} $pt={11}>
        <Select $w={150} $fs={35}>MACD<Caret $w={7} $h={12} $c="#666" /></Select>
        <Legend $ml={5} $fs={39}>
          <LegendItem $c="#2b2b2b" $mr={19}>DIF:2.23<Arr ml={14} /></LegendItem>
          <LegendItem $c="#eebc2e" $mr={21}>DEA:1.35<Arr ml={11} /></LegendItem>
          <LegendItem $c="#cc33cc">M:1.74<Arr ml={14} /></LegendItem>
        </Legend>
      </Bar>

      <ChartFrame $h={212}>
        <MacdChart />
        <AxisLabel $l={4} $t={12} $s={36}>2.23</AxisLabel>
        <AxisLabel $l={4} $t={182} $s={38} $c="#9a9a9a">-0.51</AxisLabel>
      </ChartFrame>

      <AxisRow>
        <Ticks />
        <AxisDates>
          <AxisDate>20250411</AxisDate>
          <AxisDate $ml={78}>20250523</AxisDate>
          <AxisDate $ml={197}>20250707</AxisDate>
          <AxisDate $ml={114}>20250818</AxisDate>
        </AxisDates>
      </AxisRow>

      <BannerWrap>
        <Banner>
          <svg width="46" height="40" viewBox="0 0 46 40">
            <path d="M0 11h3v17H0z" fill="#e85d0a" />
            <path d="M6 10 45 0v40l-6-2-3-3-4 1-3-3-4 1-3-3-4 1-3-3-2 0H6z" fill="#e85d0a" />
          </svg>
          <Marquee>
            <MarqueeInner>能源革新，未来无限！如何把握新能源时代机遇？去</MarqueeInner>
          </Marquee>
          <BannerSep />
          <svg width="32" height="32" viewBox="0 0 32 32">
            <path d="M2 1l28 30M30 1 2 31" stroke="#d95c17" strokeWidth="2.6" />
          </svg>
        </Banner>
      </BannerWrap>

      <Dock>
        <IndexBox>
          <IndexTri />
          <IndexVal>3740.50</IndexVal>
          <IndexRow>上证<IndexPct>1.18%</IndexPct></IndexRow>
        </IndexBox>
        <DockItem>
          <DockIcon>
            <svg width="66" height="60" viewBox="0 0 66 60">
              <path d="M10 15C5 22 4 28 5 35c2 12 12 22 25 22 6 0 10-2 14-5" {...stroke} stroke="#666" strokeWidth="3" />
              <path d="M26 3c3-1 4-1 6-1 15 0 27 12 27 28 0 4-1 7-2 10" {...stroke} stroke="#666" strokeWidth="3" />
              <path d="M1 20l8-6 2 9M64 36l-7 6-3-8" {...stroke} stroke="#666" strokeWidth="3" />
              <path d="M23 15l9 12 9-12M20 29h24M20 38h24M32 27v21" {...stroke} stroke="#666" strokeWidth="3" />
            </svg>
          </DockIcon>
          <DockText>交易</DockText>
        </DockItem>
        <DockItem>
          <DockIcon>
            <svg width="56" height="58" viewBox="0 0 56 58">
              <path d="M34 2H8C4 2 2 4 2 8v42c0 4 2 6 6 6h40c3 0 5-2 5-6V24" {...stroke} stroke="#666" strokeWidth="3.5" />
              <path d="M50 1l5 3-20 36-7 4 1-8z" fill="#666" />
            </svg>
          </DockIcon>
          <DockText>发帖</DockText>
        </DockItem>
        <DockItem>
          <DockIcon>
            <svg width="56" height="56" viewBox="0 0 56 56">
              <rect x="2" y="3" width="21" height="21" rx="4" fill="none" stroke="#666" strokeWidth="3" />
              <path d="M42 2 54 14 42 26 31 14z" fill="none" stroke="#666" strokeWidth="3" strokeLinejoin="round" />
              <rect x="2" y="32" width="21" height="21" rx="4" fill="none" stroke="#666" strokeWidth="3" />
              <rect x="31" y="32" width="21" height="21" rx="4" fill="none" stroke="#666" strokeWidth="3" />
            </svg>
          </DockIcon>
          <DockText>功能</DockText>
        </DockItem>
        <DockItem $on>
          <DockIcon>
            <svg width="56" height="56" viewBox="0 0 56 56">
              <circle cx="28" cy="28" r="26" fill="none" stroke="#d95c17" strokeWidth="3" />
              <path d="M15 28h26M28 15v26" stroke="#d95c17" strokeWidth="3" />
            </svg>
          </DockIcon>
          <DockText>加自选</DockText>
        </DockItem>
      </Dock>

      <Nav>
        <NavSlot $mr={188}>
          <svg width="46" height="38" viewBox="0 0 46 38">
            <path d="M4 5h38M4 19h38M4 33h38" stroke="#8f8f8f" strokeWidth="7" strokeLinecap="round" />
          </svg>
        </NavSlot>
        <NavSlot $mr={188} $mt={-7}>
          <svg width="58" height="45" viewBox="0 0 58 45">
            <path d="M3 23 29 3l26 20" {...stroke} stroke="#8f8f8f" strokeWidth="5.5" />
            <path d="M10 25v14c0 2 1 3 3 3h32c2 0 3-1 3-3V25" {...stroke} stroke="#8f8f8f" strokeWidth="5.5" />
          </svg>
        </NavSlot>
        <NavSlot $mr={0} $mt={-6}>
          <svg width="50" height="44" viewBox="0 0 50 44">
            <path d="M2 12 12 2v18z" fill="#8f8f8f" />
            <path d="M8 11h32c4 0 7 2 7 6v18c0 4-2 6-6 6H12" {...stroke} stroke="#8f8f8f" strokeWidth="5.5" />
          </svg>
        </NavSlot>
      </Nav>
    </Page>
  );
}
